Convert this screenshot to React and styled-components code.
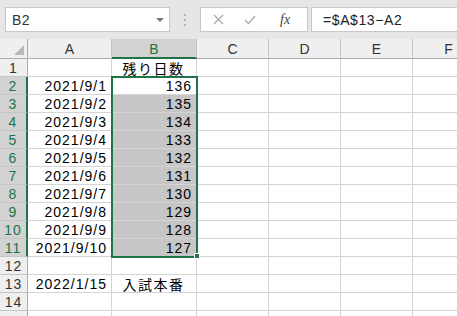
import React from "react";
import styled, { createGlobalStyle } from "styled-components";

const GREEN = "#217346";

const GlobalStyle = createGlobalStyle`
  html, body {
    margin: 0;
    padding: 0;
    background: #ffffff;
    overflow: hidden;
  }
  body {
    font-family: "Liberation Sans", "Noto Sans CJK JP", sans-serif;
  }
`;

const Page = styled.div`
  width: 457px;
  height: 316px;
  overflow: hidden;
  position: relative;
`;

// 数式バー
const Toolbar = styled.div`
  height: 39px;
  background: #e6e6e6;
  display: flex;
  align-items: center;
  padding-left: 5px;
  box-sizing: border-box;
`;

const NameBox = styled.div`
  width: 165px;
  height: 25px;
  background: #ffffff;
  border: 1px solid #c8c8c8;
  box-sizing: border-box;
  display: flex;
  align-items: center;
  justify-content: space-between;
  padding: 0 5px 0 6px;
  font-size: 14px;
  color: #333;
  letter-spacing: 0.5px;
`;

const Arrow = styled.span`
  width: 0;
  height: 0;
  border-left: 4px solid transparent;
  border-right: 4px solid transparent;
  border-top: 4px solid #7a7a7a;
`;

const Grip = styled.div`
  width: 30px;
  display: flex;
  flex-direction: column;
  align-items: center;
  gap: 3px;
`;

const Dot = styled.span`
  width: 2px;
  height: 2px;
  background: #b4b4b4;
`;

const FxBox = styled.div`
  width: 108px;
  height: 25px;
  background: #ffffff;
  border: 1px solid #c8c8c8;
  box-sizing: border-box;
  display: flex;
  align-items: center;
  padding-left: 12px;
  gap: 20px;
`;

const FxText = styled.span`
  font-family: "Liberation Serif", serif;
  font-style: italic;
  font-size: 14px;
  color: #444;
  margin-left: 4px;
`;

const FormulaInput = styled.div`
  flex: 1;
  height: 25px;
  margin-left: 3px;
  background: #ffffff;
  border: 1px solid #c8c8c8;
  border-right: none;
  box-sizing: border-box;
  display: flex;
  align-items: center;
  padding-left: 11px;
  font-size: 14px;
  color: #222;
  letter-spacing: 0.6px;
`;

// シート
const Sheet = styled.div`
  position: relative;
  display: grid;
  grid-template-columns: 28px 84px 85px 72px 72px 72px 72px;
  grid-template-rows: 20px;
  grid-auto-rows: 18px;
`;

const Corner = styled.div`
  background: #efefef;
  border-right: 1px solid #ababab;
  border-bottom: 1px solid #ababab;
  box-sizing: border-box;
  display: flex;
  align-items: flex-end;
  justify-content: flex-end;
  padding: 0 3px 3px 0;
`;

const ColHead = styled.div`
  background: ${(p) => (p.$sel ? "#d2d2d2" : "#efefef")};
  border-right: 1px solid #c6c6c6;
  border-bottom: ${(p) => (p.$sel ? `2px solid ${GREEN}` : "1px solid #ababab")};
  box-sizing: border-box;
  display: flex;
  align-items: center;
  justify-content: center;
  font-size: 14px;
  color: ${(p) => (p.$sel ? GREEN : "#333")};
  padding-top: ${(p) => (p.$sel ? "1px" : "0")};
`;

const RowHead = styled.div`
  background: ${(p) => (p.$sel ? "#d2d2d2" : "#efefef")};
  border-right: ${(p) => (p.$sel ? `2px solid ${GREEN}` : "1px solid #ababab")};
  border-bottom: 1px solid #c6c6c6;
  box-sizing: border-box;
  display: flex;
  align-items: center;
  justify-content: center;
  font-size: 14px;
  letter-spacing: 1px;
  color: ${(p) => (p.$sel ? GREEN : "#333")};
`;

const Cell = styled.div`
  background: ${(p) => (p.$fill ? "#c6c6c6" : "#ffffff")};
  border-right: 1px solid #d4d4d4;
  border-bottom: 1px solid #d4d4d4;
  box-sizing: border-box;
  display: flex;
  align-items: center;
  justify-content: ${(p) =>
    p.$align === "right" ? "flex-end" : p.$align === "center" ? "center" : "flex-start"};
  padding: 0 4px 0 3px;
  font-size: 14px;
  letter-spacing: 1px;
  color: #000;
  white-space: nowrap;
  overflow: hidden;
`;

const JpText = styled.span`
  font-family: "Noto Sans CJK JP", sans-serif;
  font-size: 14px;
  letter-spacing: 1.5px;
  line-height: 1;
`;

// 選択範囲の枠
const Selection = styled.div`
  position: absolute;
  left: 111px;
  top: 37px;
  width: 87px;
  height: 182px;
  border: 2px solid ${GREEN};
  box-sizing: border-box;
  pointer-events: none;
`;

const Handle = styled.div`
  position: absolute;
  left: 194px;
  top: 214px;
  width: 6px;
  height: 6px;
  background: ${GREEN};
  border: 1px solid #ffffff;
  box-sizing: border-box;
`;

const rows = [
  { a: "", b: "残り日数", bJp: true },
  { a: "2021/9/1", b: "136" },
  { a: "2021/9/2", b: "135" },
  { a: "2021/9/3", b: "134" },
  { a: "2021/9/4", b: "133" },
  { a: "2021/9/5", b: "132" },
  { a: "2021/9/6", b: "131" },
  { a: "2021/9/7", b: "130" },
  { a: "2021/9/8", b: "129" },
  { a: "2021/9/9", b: "128" },
  { a: "2021/9/10", b: "127" },
  { a: "", b: "" },
  { a: "2022/1/15", b: "入試本番", bJp: true },
  { a: "", b: "" },
  { a: "", b: "" },
];

const cols = ["A", "B", "C", "D", "E", "F"];

const App = () => {
  return (
    <Page>
      <GlobalStyle />
      <Toolbar>
        <NameBox>
          B2
          <Arrow />
        </NameBox>
        <Grip>
          <Dot />
          <Dot />
          <Dot />
        </Grip>
        <FxBox>
          <svg width="11" height="11" viewBox="0 0 11 11">
            <path d="M1 1 L10 10 M10 1 L1 10" stroke="#a8a8a8" strokeWidth="1.2" fill="none" />
          </svg>
          <svg width="12" height="10" viewBox="0 0 12 10">
            <path d="M1 5 L4.5 8.5 L11 1" stroke="#a8a8a8" strokeWidth="1.2" fill="none" />
          </svg>
          <FxText>fx</FxText>
        </FxBox>
        <FormulaInput>=$A$13−A2</FormulaInput>
      </Toolbar>

      <Sheet>
        <Corner>
          <svg width="10" height="10" viewBox="0 0 10 10">
            <polygon points="10,0 10,10 0,10" fill="#b8b8b8" />
          </svg>
        </Corner>
        {cols.map((c) => (
          <ColHead key={c} $sel={c === "B"}>
            {c}
          </ColHead>
        ))}

        {rows.map((r, i) => {
          const n = i + 1;
          const inSel = n >= 2 && n <= 11;
          // 最終行は画面下端で切れるので番号は出さない
          const label = n < rows.length ? n : "";
          return (
            <React.Fragment key={n}>
              <RowHead $sel={inSel}>{label}</RowHead>
              <Cell $align="right">{r.a}</Cell>
              <Cell $align={r.bJp ? "center" : "right"} $fill={n >= 3 && n <= 11}>
                {r.bJp ? <JpText>{r.b}</JpText> : r.b}
              </Cell>
              <Cell />
              <Cell />
              <Cell />
              <Cell />
            </React.Fragment>
          );
        })}
        <Selection />
        <Handle />
      </Sheet>
    </Page>
  );
};

export default App;
